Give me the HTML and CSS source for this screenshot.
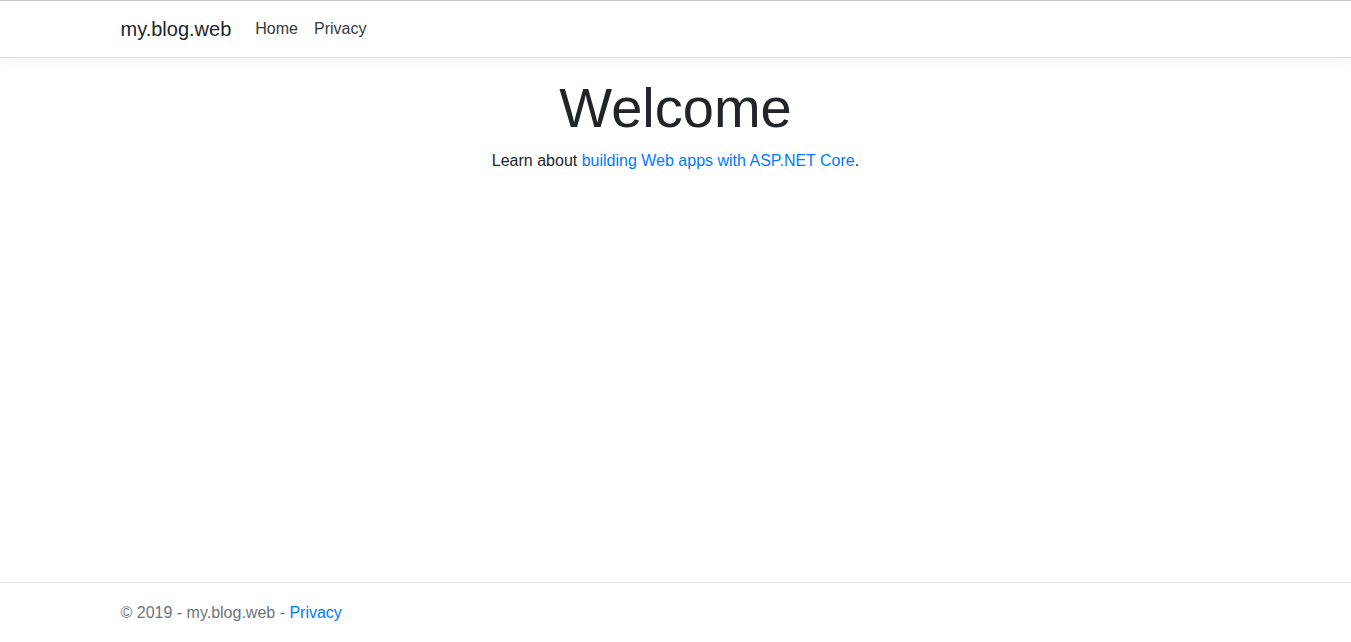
FILE: index.html
```html
<!DOCTYPE html>
<html lang="en">
<head>
<meta charset="utf-8">
<meta name="viewport" content="width=device-width, initial-scale=1">
<title>Home Page - my.blog.web</title>
<link rel="stylesheet" href="styles.css">
</head>
<body>
<header class="site-header">
  <nav class="container navbar">
    <a class="brand" href="/">my.blog.web</a>
    <ul class="nav-list">
      <li><a class="nav-link" href="/">Home</a></li>
      <li><a class="nav-link" href="/privacy">Privacy</a></li>
    </ul>
  </nav>
</header>
<main class="container welcome">
  <h1 class="title">Welcome</h1>
  <p class="intro">Learn about <a class="link" href="/docs">building Web apps with ASP.NET Core</a>.</p>
</main>
<footer class="site-footer">
  <div class="container">© 2019 - my.blog.web - <a class="link" href="/privacy">Privacy</a></div>
</footer>
</body>
</html>
```
FILE: styles.css
```css
* {
  box-sizing: border-box;
}

body {
  margin: 0;
  min-height: 100vh;
  display: flex;
  flex-direction: column;
  border-top: 1px solid #c8c8c8;
  background: #fff;
  color: #212529;
  font: 16px/24px "Liberation Sans", Arial, sans-serif;
}

.container {
  width: 100%;
  max-width: 1140px;
  margin: 0 auto;
  padding: 0 15px;
}

.site-header {
  padding: 8px 0;
  border-bottom: 1px solid #dee2e6;
  box-shadow: 0 4px 12px rgba(0, 0, 0, 0.05);
}

.navbar {
  display: flex;
  align-items: center;
}

.brand {
  margin-right: 16px;
  padding: 5px 0;
  color: #212529;
  font-size: 20px;
  line-height: 30px;
  text-decoration: none;
}

.nav-list {
  display: flex;
  margin: 0;
  padding: 0;
  list-style: none;
}

.nav-link {
  display: block;
  padding: 8px;
  color: #343a40;
  text-decoration: none;
}

.welcome {
  flex: 1;
  padding-top: 16px;
  text-align: center;
}

.title {
  margin: 0 0 8px;
  font-size: 56px;
  font-weight: 300;
  line-height: 67px;
}

.intro {
  margin: 0 0 16px;
}

.link {
  color: #007bff;
  text-decoration: none;
}

.link:hover {
  text-decoration: underline;
}

.site-footer {
  border-top: 1px solid #dee2e6;
  color: #6c757d;
  line-height: 59px;
}
```
